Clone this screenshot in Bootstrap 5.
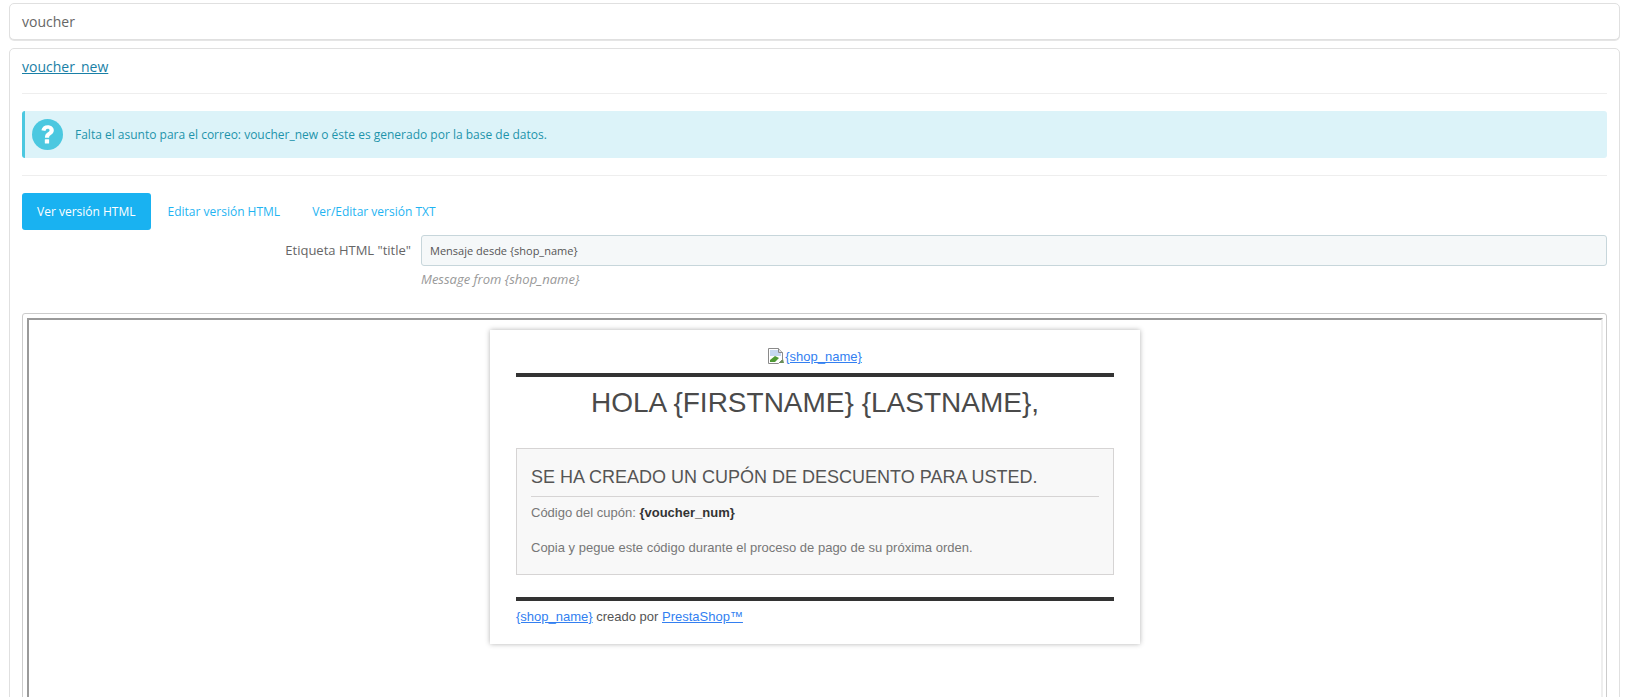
<!DOCTYPE html>
<html lang="es">
<head>
<meta charset="utf-8">
<title>voucher</title>
<link href="https://cdn.jsdelivr.net/npm/bootstrap@5.3.0/dist/css/bootstrap.min.css" rel="stylesheet">
<style>
html,body{height:697px;overflow:hidden;background:#fff}
body{font-family:"Open Sans","Liberation Sans",sans-serif;font-size:12px;color:#555;padding:3px 6px 0 9px}
.ps-panel{border:1px solid #e0e0e0;border-radius:5px;box-shadow:0 1px 0 rgba(0,0,0,.1);background:#fff}
.ps-head{height:37px;font-size:14px;color:#666;padding:0 12px;display:flex;align-items:center;margin-bottom:8px}
.ps-main{padding:8px 12px 0;height:700px}
.ps-link{font-size:14px;color:#1a7fa6;line-height:20px;display:block}
.ps-rule{margin:0;border:0;border-top:1px solid #eee;opacity:1}
.ps-rule-a{margin-top:16px;margin-bottom:17px}
.ps-rule-b{margin-top:17px;margin-bottom:17px}
.ps-alert{height:47px;margin:0;padding:0 0 0 7px;background:#dcf3f9;border:0;border-left:3px solid #4bc8e0;border-radius:3px;color:#1e94ab;font-size:12px;display:flex;align-items:center;gap:12px}
.ps-tabs{gap:0;margin-bottom:5px}
.ps-tabs .nav-link{font-size:12px;height:37px;display:flex;align-items:center;padding:0 16px;color:#1fb4f2;border-radius:3px}
.ps-tabs .nav-item:nth-child(2){margin-left:1px}
.ps-tabs .nav-link.active{background:#19b2f1;color:#fff;padding:0 15px}
.ps-field{display:flex;gap:10px}
.ps-label{width:389px;text-align:right;font-size:13px;color:#666;line-height:31px;margin:0}
.ps-input-wrap{flex:1}
.ps-input{height:31px;font-size:11px;padding:0 8px;color:#555;background:#f5f8f9;border:1px solid #c7d6db;border-radius:3px}
.ps-help{font-size:13px;font-style:italic;color:#999;margin-top:5px;line-height:17px}
.ps-frame{margin-top:25px;border:1px solid #ccc;border-radius:3px;padding:4px 3px 0 4px;height:400px}
.ps-iframe{border:2px solid;border-color:#9a9a9a #eee #eee #9a9a9a;height:400px;padding-top:10px;font-family:"Liberation Sans",Arial,sans-serif}
.ml-card{width:650px;height:314px;margin:0 auto;padding:17px 26px 0;background:#fff;box-shadow:0 0 5px rgba(0,0,0,.3);font-size:13px;color:#555}
.ml-logo{text-align:center;height:26px;line-height:19px}
.ml-logo a,.ml-foot a{color:#337ff1}
.ml-logo svg{vertical-align:-3px}
.ml-bar{height:4px;background:#333}
.ml-title{font-size:28px;font-weight:400;text-align:center;color:#4a4a4a;line-height:32px;margin:10px 0 29px;font-family:inherit}
.ml-box{height:127px;background:#f8f8f8;border:1px solid #d6d4d4;padding:0 14px}
.ml-sub{font-size:18px;font-weight:400;color:#555;margin:0;padding-top:17px;height:48px;line-height:23px;border-bottom:1px solid #d6d4d4;font-family:inherit}
.ml-line{margin:0;line-height:16px;color:#777}
.ml-line b{color:#333}
.ml-code{margin-top:8px}
.ml-copy{margin-top:19px}
.ml-foot{margin-top:8px;line-height:16px}
.ml-bar-b{margin-top:22px}
</style>
</head>
<body>
<div class="ps-panel ps-head">voucher</div>
<div class="ps-panel ps-main">
  <a class="ps-link" href="#">voucher_new</a>
  <hr class="ps-rule ps-rule-a">
  <div class="alert ps-alert" role="alert">
    <svg width="31" height="31" viewBox="0 0 33 33" aria-hidden="true"><circle cx="16.5" cy="16.5" r="16.5" fill="#4bc8e0"/><g transform="translate(16.5 16.5) scale(1.14) translate(-16.7 -16.500)"><path d="M11 12.6c.5-3 2.8-4.8 5.900-4.800 3.300 0 5.700 2 5.700 4.800 0 2.200-1.200 3.300-2.600 4.200-1.300.9-1.800 1.400-1.800 2.700h-3.900c0-2.500.8-3.600 2.500-4.800 1.100-.8 1.800-1.200 1.800-2.100 0-.9-.7-1.400-1.700-1.400-1.100 0-1.800.7-2.100 2z" fill="#fff"/><rect x="14.200" y="21" width="4" height="4" rx=".5" fill="#fff"/></g></svg>
    <span>Falta el asunto para el correo: voucher_new o éste es generado por la base de datos.</span>
  </div>
  <hr class="ps-rule ps-rule-b">
  <ul class="nav nav-pills ps-tabs">
    <li class="nav-item"><a class="nav-link active" href="#">Ver versión HTML</a></li>
    <li class="nav-item"><a class="nav-link" href="#">Editar versión HTML</a></li>
    <li class="nav-item"><a class="nav-link" href="#">Ver/Editar versión TXT</a></li>
  </ul>
  <div class="ps-field">
    <label class="ps-label" for="ttl">Etiqueta HTML "title"</label>
    <div class="ps-input-wrap">
      <input id="ttl" class="form-control ps-input" type="text" value="Mensaje desde {shop_name}">
      <div class="ps-help">Message from {shop_name}</div>
    </div>
  </div>
  <div class="ps-frame">
    <div class="ps-iframe">
      <div class="ml-card">
        <div class="ml-logo"><a href="#"><svg width="17" height="16" viewBox="0 0 17 16" aria-hidden="true"><path d="M.5.5h10l4 4v7l-4 4H.5z" fill="#fff" stroke="#8a8a8a"/><path d="M10.500.5v4h4" fill="#ddd" stroke="#8a8a8a"/><path d="M2 2h8v3h3v3H2z" fill="#c5d8f2"/><path d="M2 14v-2l5-4 4 2-4 4z" fill="#4f9a35"/><path d="M11 15l4-4 1 4z" fill="#6a8f5a"/></svg>{shop_name}</a></div>
        <div class="ml-bar"></div>
        <h1 class="ml-title">HOLA {FIRSTNAME} {LASTNAME},</h1>
        <div class="ml-box">
          <h2 class="ml-sub">SE HA CREADO UN CUPÓN DE DESCUENTO PARA USTED.</h2>
          <p class="ml-line ml-code">Código del cupón: <b>{voucher_num}</b></p>
          <p class="ml-line ml-copy">Copia y pegue este código durante el proceso de pago de su próxima orden.</p>
        </div>
        <div class="ml-bar ml-bar-b"></div>
        <div class="ml-foot"><a href="#">{shop_name}</a> creado por <a href="#">PrestaShop™</a></div>
      </div>
    </div>
  </div>
</div>
</body>
</html>
